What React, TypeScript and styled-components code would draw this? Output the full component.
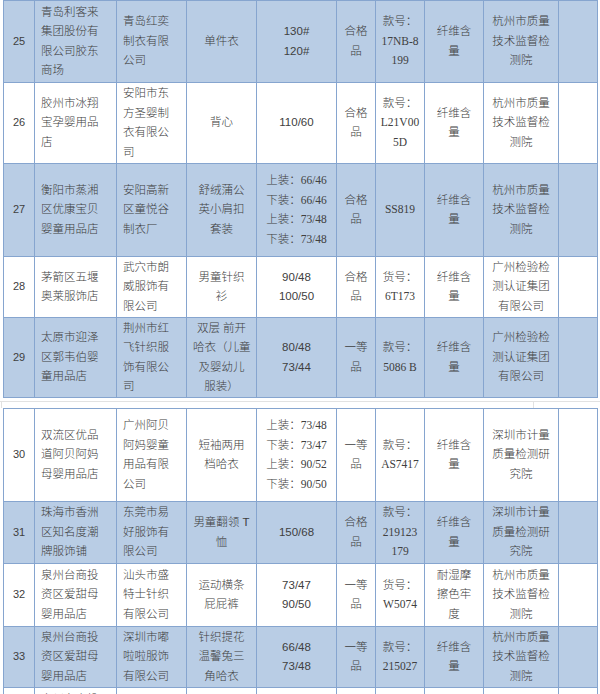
import styled, { createGlobalStyle } from "styled-components";

const GlobalStyle = createGlobalStyle`
    html, body {
        margin: 0;
        padding: 0;
        background: #ffffff;
        overflow: hidden;
    }
`

type Row = {
    no: string
    shop: string[]
    maker: string[]
    name: string[]
    size: string[]
    grade: string[]
    code: string[]
    item: string[]
    lab: string[]
    h: number
    shade: boolean
}

const fiber = ['纤维含', '量']
const hz = ['杭州市质量', '技术监督检', '测院']
const gz = ['广州检验检', '测认证集团', '有限公司']
const sz = ['深圳市计量', '质量检测研', '究院']

const firstPart: Row[] = [
    {
        no: '25', shop: ['青岛利客来', '集团股份有', '限公司胶东', '商场'], maker: ['青岛红奕', '制衣有限', '公司'],
        name: ['单件衣'], size: ['130#', '120#'], grade: ['合格', '品'], code: ['款号：', '17NB-8', '199'],
        item: fiber, lab: hz, h: 82, shade: true
    },
    {
        no: '26', shop: ['胶州市冰翔', '宝孕婴用品', '店'], maker: ['安阳市东', '方圣婴制', '衣有限公', '司'],
        name: ['背心'], size: ['110/60'], grade: ['合格', '品'], code: ['款号：', 'L21V00', '5D'],
        item: fiber, lab: hz, h: 81, shade: false
    },
    {
        no: '27', shop: ['衡阳市蒸湘', '区优康宝贝', '婴童用品店'], maker: ['安阳高新', '区童悦谷', '制衣厂'],
        name: ['舒绒蒲公', '英小肩扣', '套装'], size: ['上装：66/46', '下装：66/46', '上装：73/48', '下装：73/48'],
        grade: ['合格', '品'], code: ['SS819'], item: fiber, lab: hz, h: 93, shade: true
    },
    {
        no: '28', shop: ['茅箭区五堰', '奥莱服饰店'], maker: ['武穴市朗', '威服饰有', '限公司'],
        name: ['男童针织', '衫'], size: ['90/48', '100/50'], grade: ['合格', '品'], code: ['货号：', '6T173'],
        item: fiber, lab: gz, h: 61, shade: false
    },
    {
        no: '29', shop: ['太原市迎泽', '区郭韦伯婴', '童用品店'], maker: ['荆州市红', '飞针织服', '饰有限公', '司'],
        name: ['双层 前开', '哈衣（儿童', '及婴幼儿', '服装）'], size: ['80/48', '73/44'], grade: ['一等', '品'],
        code: ['款号：', '5086 B'], item: fiber, lab: gz, h: 80, shade: true
    },
]

const secondPart: Row[] = [
    {
        no: '30', shop: ['双流区优品', '道阿贝阿妈', '母婴用品店'], maker: ['广州阿贝', '阿妈婴童', '用品有限', '公司'],
        name: ['短袖两用', '档哈衣'], size: ['上装：73/48', '下装：73/47', '上装：90/52', '下装：90/50'],
        grade: ['一等', '品'], code: ['款号：', 'AS7417'], item: fiber, lab: sz, h: 93, shade: false
    },
    {
        no: '31', shop: ['珠海市香洲', '区知名度潮', '牌服饰铺'], maker: ['东莞市易', '好服饰有', '限公司'],
        name: ['男童翻领 T', '恤'], size: ['150/68'], grade: ['合格', '品'], code: ['款号：', '219123', '179'],
        item: fiber, lab: sz, h: 62, shade: true
    },
    {
        no: '32', shop: ['泉州台商投', '资区爱甜母', '婴用品店'], maker: ['汕头市盛', '特士针织', '有限公司'],
        name: ['运动横条', '屁屁裤'], size: ['73/47', '90/50'], grade: ['一等', '品'], code: ['货号：', 'W5074'],
        item: ['耐湿摩', '擦色牢', '度'], lab: hz, h: 63, shade: false
    },
    {
        no: '33', shop: ['泉州台商投', '资区爱甜母', '婴用品店'], maker: ['深圳市嘟', '啦啦服饰', '有限公司'],
        name: ['针织提花', '温馨兔三', '角哈衣'], size: ['66/48', '73/48'], grade: ['一等', '品'], code: ['款号：', '215027'],
        item: fiber, lab: hz, h: 61, shade: true
    },
    {
        no: '34', shop: ['泉州台商投', '资区爱甜母', '婴用品店', ''], maker: ['福建省晋', '江市童装', '有限公司'],
        name: ['婴儿连体', '衣'], size: ['73/48'], grade: ['合格', '品'], code: ['款号：', '3301'],
        item: fiber, lab: hz, h: 82, shade: false
    },
]

const widths = [31, 82, 70, 70, 80, 39, 49, 59, 75, 39]

export default function App() {
    return (
        <Page>
            <GlobalStyle/>
            <Part rows={firstPart}/>
            <PageBreak/>
            <Part rows={secondPart}/>
        </Page>
    )
}

// each cell holds its text as explicit lines, broken where the source table breaks them
const Lines = ({items}: { items: string[] }) => (
    <>
        {items.map((t, i) => (
            <span key={i}>
                {i > 0 && <br/>}
                {t || '\u00a0'}
            </span>
        ))}
    </>
)

const Part = ({rows}: { rows: Row[] }) => (
    <Sheet>
        <colgroup>
            {widths.map((w, i) => <col key={i} style={{width: w}}/>)}
        </colgroup>
        <tbody>
        {rows.map(r => (
            <TableRow key={r.no} $shade={r.shade} $h={r.h}>
                <NumCell>{r.no}</NumCell>
                <Cell $align="left"><Lines items={r.shop}/></Cell>
                <Cell $align="left"><Lines items={r.maker}/></Cell>
                <Cell><Lines items={r.name}/></Cell>
                <Cell $latin={r.size[0].startsWith('上') ? 'serif' : 'sans'}><Lines items={r.size}/></Cell>
                <Cell $tight><Lines items={r.grade}/></Cell>
                <Cell $tight $latin="serif"><Lines items={r.code}/></Cell>
                <Cell><Lines items={r.item}/></Cell>
                <Cell $tight><Lines items={r.lab}/></Cell>
                <Cell/>
            </TableRow>
        ))}
        </tbody>
    </Sheet>
)

const Page = styled.div`
    width: 600px;
    height: 694px;
    overflow: hidden;
    padding-left: 3px;
    box-sizing: border-box;
`

const Sheet = styled.table`
    border-collapse: collapse;
    table-layout: fixed;
    width: 594px;
    font-size: 11.5px;
    font-weight: 300;
    color: #404040;
`

const TableRow = styled.tr<{ $shade: boolean; $h: number }>`
    height: ${p => p.$h}px;
    background: ${p => (p.$shade ? '#b9cde5' : '#ffffff')};
`

const Cell = styled.td<{ $align?: 'left' | 'center'; $latin?: 'serif' | 'sans'; $tight?: boolean }>`
    border: 1px solid #86a5cf;
    padding: 0 ${p => (p.$tight ? 2 : 6)}px;
    text-align: ${p => p.$align ?? 'center'};
    vertical-align: middle;
    line-height: 19.5px;
    white-space: nowrap;
    overflow: hidden;
    font-family: ${p => p.$latin === 'serif'
            ? '"Liberation Serif", "Noto Sans CJK SC", serif'
            : '"Liberation Sans", "Noto Sans CJK SC", sans-serif'};
`

const NumCell = styled(Cell)`
    font-size: 11px;
    font-weight: 400;
`

const PageBreak = styled.div`
    height: 10px;
    margin-left: -3px;
    background: linear-gradient(#e2e2e2, #e2e2e2) 0 3px / 100% 1px no-repeat,
    linear-gradient(#e2e2e2, #e2e2e2) 533px 3px / 1px 7px no-repeat,
    linear-gradient(#e2e2e2, #e2e2e2) 1px 3px / 1px 7px no-repeat;
`
